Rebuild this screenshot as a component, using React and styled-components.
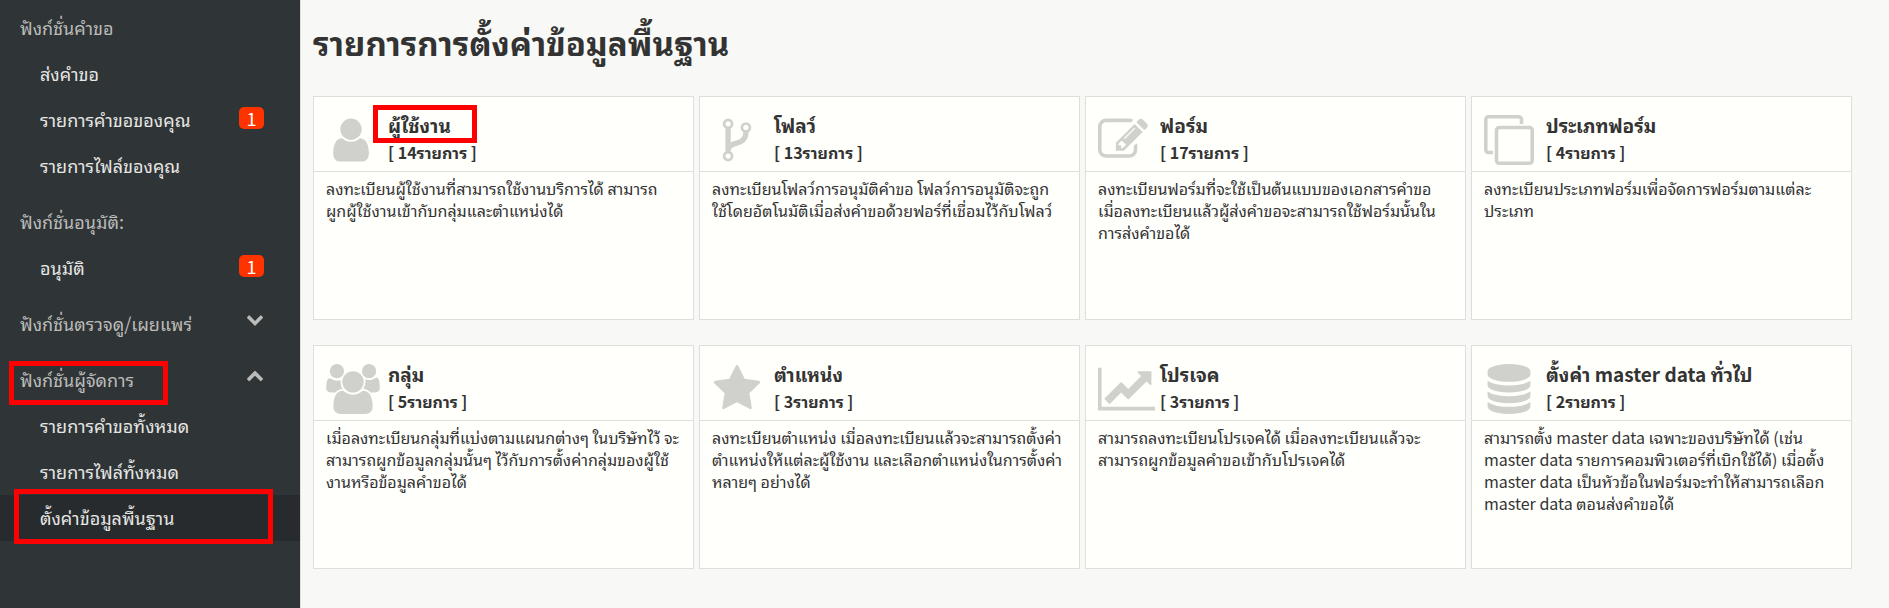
import React, { useState } from "react";
import styled, { createGlobalStyle } from "styled-components";

const icons = {
	user: {
		width: 1792,
		path: "M1536 1399q0 109-62.5 187t-150.5 78h-854q-88 0-150.5-78t-62.5-187q0-85 8.5-160.5t31.5-152 58.5-131 94-89 134.5-34.5q131 128 313 128t313-128q76 0 134.5 34.5t94 89 58.5 131 31.5 152 8.5 160.5zm-256-887q0 159-112.5 271.5t-271.5 112.5-271.5-112.5-112.5-271.5 112.5-271.5 271.5-112.5 271.5 112.5 112.5 271.5z",
	},
	fork: {
		width: 1792,
		path: "M672 1472q0-40-28-68t-68-28-68 28-28 68 28 68 68 28 68-28 28-68zm0-1152q0-40-28-68t-68-28-68 28-28 68 28 68 68 28 68-28 28-68zm640 128q0-40-28-68t-68-28-68 28-28 68 28 68 68 28 68-28 28-68zm96 0q0 52-26 96.5t-70 69.5q-2 287-226 414-67 38-203 81-128 40-169.5 71t-41.5 100v26q44 25 70 69.5t26 96.5q0 80-56 136t-136 56-136-56-56-136q0-52 26-96.5t70-69.5v-820q-44-25-70-69.5t-26-96.5q0-80 56-136t136-56 136 56 56 136q0 52-26 96.5t-70 69.5v497q54-26 154-57 55-17 87.5-29.5t70.5-31 59-39.5 40.5-51 28-69.5 8.5-91.5q-44-25-70-69.5t-26-96.5q0-80 56-136t136-56 136 56 56 136z",
	},
	edit: {
		width: 1792,
		path: "M888 1184l116-116-152-152-116 116v56h96v96h56zm440-720q-16-16-33 1l-350 350q-17 17-1 33t33-1l350-350q17-17 1-33zm80 594v190q0 119-84.5 203.5t-203.5 84.5h-832q-119 0-203.5-84.5t-84.5-203.5v-832q0-119 84.5-203.5t203.5-84.5h832q63 0 117 25 15 7 18 23 3 17-9 29l-49 49q-14 14-32 8-23-6-45-6h-832q-66 0-113 47t-47 113v832q0 66 47 113t113 47h832q66 0 113-47t47-113v-126q0-13 9-22l64-64q15-15 35-7t20 29zm-96-738l288 288-672 672h-288v-288zm444 132l-92 92-288-288 92-92q28-28 68-28t68 28l152 152q28 28 28 68t-28 68z",
	},
	clone: {
		width: 1792,
		path: "M1664 1632v-1088q0-13-9.5-22.5t-22.5-9.5h-1088q-13 0-22.5 9.5t-9.5 22.5v1088q0 13 9.5 22.5t22.5 9.5h1088q13 0 22.5-9.5t9.5-22.5zm128-1088v1088q0 66-47 113t-113 47h-1088q-66 0-113-47t-47-113v-1088q0-66 47-113t113-47h1088q66 0 113 47t47 113zm-384-384v160h-128v-160q0-13-9.5-22.5t-22.5-9.5h-1088q-13 0-22.5 9.5t-9.5 22.5v1088q0 13 9.5 22.5t22.5 9.5h160v128h-160q-66 0-113-47t-47-113v-1088q0-66 47-113t113-47h1088q66 0 113 47t47 113z",
	},
	users: {
		width: 1920,
		path: "M593 896q-162 5-265 128h-134q-82 0-138-40.5t-56-118.5q0-353 124-353 6 0 43.5 21t97.5 42.5 119 21.5q67 0 133-23-5 37-5 66 0 159 81 280zm1071 637q0 120-73 189.5t-194 69.5h-874q-121 0-194-69.5t-73-189.5q0-53 3.5-103.5t14-109 26.5-108.5 43-97.5 62-81 85.5-53.5 111.5-20q10 0 43 21.5t73 48 107 48 135 21.5 135-21.5 107-48 73-48 43-21.5q61 0 111.5 20t85.5 53.5 62 81 43 97.5 26.5 108.5 14 109 3.5 103.5zm-1024-1277q0 106-75 181t-181 75-181-75-75-181 75-181 181-75 181 75 75 181zm704 384q0 159-112.5 271.5t-271.5 112.5-271.5-112.5-112.5-271.5 112.5-271.5 271.5-112.5 271.5 112.5 112.5 271.5zm576 225q0 78-56 118.5t-138 40.5h-134q-103-123-265-128 81-121 81-280 0-29-5-66 66 23 133 23 59 0 119-21.5t97.5-42.5 43.5-21q124 0 124 353zm-128-609q0 106-75 181t-181 75-181-75-75-181 75-181 181-75 181 75 75 181z",
	},
	star: {
		width: 1792,
		path: "M1728 647q0 22-26 48l-363 354 86 500q1 7 1 20 0 21-10.5 35.5t-30.5 14.5q-19 0-40-12l-449-236-449 236q-22 12-40 12-21 0-31.5-14.5t-10.5-35.5q0-6 2-20l86-500-364-354q-25-27-25-48 0-37 56-46l502-73 225-455q19-41 49-41t49 41l225 455 502 73q56 9 56 46z",
	},
	chart: {
		width: 2048,
		path: "M2048 1536v128h-2048v-1536h128v1408h1920zm-128-1248v435q0 21-19.5 29.5t-35.5-7.5l-121-121-633 633q-10 10-23 10t-23-10l-233-233-416 416-192-192 585-585q10-10 23-10t23 10l233 233 464-464-121-121q-16-16-7.5-35.5t29.5-19.5h435q14 0 23 9t9 23z",
	},
	database: {
		width: 1792,
		path: "M896 768q237 0 443-43t325-127v170q0 69-103 128t-280 93.5-385 34.5-385-34.5-280-93.5-103-128v-170q119 84 325 127t443 43zm0 768q237 0 443-43t325-127v170q0 69-103 128t-280 93.5-385 34.5-385-34.5-280-93.5-103-128v-170q119 84 325 127t443 43zm0-384q237 0 443-43t325-127v170q0 69-103 128t-280 93.5-385 34.5-385-34.5-280-93.5-103-128v-170q119 84 325 127t443 43zm0-1152q208 0 385 34.5t280 93.5 103 128v128q0 69-103 128t-280 93.5-385 34.5-385-34.5-280-93.5-103-128v-128q0-69 103-128t280-93.5 385-34.5z",
	},
	down: {
		width: 1792,
		path: "M1683 808l-742 741q-19 19-45 19t-45-19l-742-741q-19-19-19-45.5t19-45.5l166-165q19-19 45-19t45 19l531 531 531-531q19-19 45-19t45 19l166 165q19 19 19 45.5t-19 45.5z",
	},
	up: {
		width: 1792,
		path: "M1683 1331l-166 165q-19 19-45 19t-45-19l-531-531-531 531q-19 19-45 19t-45-19l-166-165q-19-19-19-45.5t19-45.5l742-741q19-19 45-19t45 19l742 741q19 19 19 45.5t-19 45.5z",
	},
};

const requestMenu = [
	{ label: "ส่งคำขอ" },
	{ label: "รายการคำขอของคุณ", count: 1 },
	{ label: "รายการไฟล์ของคุณ" },
];
const approveMenu = [{ label: "อนุมัติ", count: 1 }];
const adminMenu = [
	{ label: "รายการคำขอทั้งหมด" },
	{ label: "รายการไฟล์ทั้งหมด" },
	{ label: "ตั้งค่าข้อมูลพื้นฐาน", active: true },
];

const settings = [
	{
		icon: "user",
		title: "ผู้ใช้งาน",
		count: 14,
		marked: true,
		lines: ["ลงทะเบียนผู้ใช้งานที่สามารถใช้งานบริการได้ สามารถ", "ผูกผู้ใช้งานเข้ากับกลุ่มและตำแหน่งได้"],
	},
	{
		icon: "fork",
		title: "โฟลว์",
		count: 13,
		lines: ["ลงทะเบียนโฟลว์การอนุมัติคำขอ โฟลว์การอนุมัติจะถูก", "ใช้โดยอัตโนมัติเมื่อส่งคำขอด้วยฟอร์ที่เชื่อมไว้กับโฟลว์"],
	},
	{
		icon: "edit",
		title: "ฟอร์ม",
		count: 17,
		lines: [
			"ลงทะเบียนฟอร์มที่จะใช้เป็นต้นแบบของเอกสารคำขอ",
			"เมื่อลงทะเบียนแล้วผู้ส่งคำขอจะสามารถใช้ฟอร์มนั้นใน",
			"การส่งคำขอได้",
		],
	},
	{
		icon: "clone",
		title: "ประเภทฟอร์ม",
		count: 4,
		lines: ["ลงทะเบียนประเภทฟอร์มเพื่อจัดการฟอร์มตามแต่ละ", "ประเภท"],
	},
	{
		icon: "users",
		title: "กลุ่ม",
		count: 5,
		lines: [
			"เมื่อลงทะเบียนกลุ่มที่แบ่งตามแผนกต่างๆ ในบริษัทไว้ จะ",
			"สามารถผูกข้อมูลกลุ่มนั้นๆ ไว้กับการตั้งค่ากลุ่มของผู้ใช้",
			"งานหรือข้อมูลคำขอได้",
		],
	},
	{
		icon: "star",
		title: "ตำแหน่ง",
		count: 3,
		lines: [
			"ลงทะเบียนตำแหน่ง เมื่อลงทะเบียนแล้วจะสามารถตั้งค่า",
			"ตำแหน่งให้แต่ละผู้ใช้งาน และเลือกตำแหน่งในการตั้งค่า",
			"หลายๆ อย่างได้",
		],
	},
	{
		icon: "chart",
		title: "โปรเจค",
		count: 3,
		lines: ["สามารถลงทะเบียนโปรเจคได้ เมื่อลงทะเบียนแล้วจะ", "สามารถผูกข้อมูลคำขอเข้ากับโปรเจคได้"],
	},
	{
		icon: "database",
		title: "ตั้งค่า master data ทั่วไป",
		count: 2,
		lines: [
			"สามารถตั้ง master data เฉพาะของบริษัทได้ (เช่น",
			"master data รายการคอมพิวเตอร์ที่เบิกใช้ได้) เมื่อตั้ง",
			"master data เป็นหัวข้อในฟอร์มจะทำให้สามารถเลือก",
			"master data ตอนส่งคำขอได้",
		],
	},
];

function Icon({ name, size }) {
	const { width, path } = icons[name];
	return (
		<svg
			width={Math.round((size * width) / 1792)}
			height={size}
			viewBox={`0 0 ${width} 1792`}
			fill="currentColor"
			aria-hidden="true"
		>
			<path d={path} />
		</svg>
	);
}

function MenuList({ items }) {
	return (
		<Menu>
			{items.map((item) => (
				<li key={item.label}>
					<MenuLink href="#" $active={item.active}>
						{item.label}
						{item.count && <Badge>{item.count}</Badge>}
						{item.active && <ActiveMark />}
					</MenuLink>
				</li>
			))}
		</Menu>
	);
}

function SettingCard({ data }) {
	return (
		<Card>
			<CardHeader>
				<CardIcon>
					<Icon name={data.icon} size={50} />
				</CardIcon>
				<div>
					<CardTitle>
						{data.title}
						{data.marked && <TitleMark />}
					</CardTitle>
					<CardCount>[ {data.count}รายการ ]</CardCount>
				</div>
			</CardHeader>
			<CardBody>
				{data.lines.map((line) => (
					<Line key={line}>{line}</Line>
				))}
			</CardBody>
		</Card>
	);
}

export default function App() {
	const [viewOpen, setViewOpen] = useState(false);
	const [adminOpen, setAdminOpen] = useState(true);

	return (
		<Page>
			<GlobalStyle />
			<Sidebar>
				<Group>
					<GroupTitle>ฟังก์ชั่นคำขอ</GroupTitle>
					<MenuList items={requestMenu} />
				</Group>
				<Group>
					<GroupTitle>ฟังก์ชั่นอนุมัติ:</GroupTitle>
					<MenuList items={approveMenu} />
				</Group>
				<Group>
					<GroupToggle aria-expanded={viewOpen} onClick={() => setViewOpen(!viewOpen)}>
						ฟังก์ชั่นตรวจดู/เผยแพร่
						<Icon name={viewOpen ? "up" : "down"} size={18} />
					</GroupToggle>
				</Group>
				<Group>
					<GroupToggle aria-expanded={adminOpen} onClick={() => setAdminOpen(!adminOpen)}>
						ฟังก์ชั่นผู้จัดการ
						<Icon name={adminOpen ? "up" : "down"} size={18} />
						<GroupMark />
					</GroupToggle>
					{adminOpen && <MenuList items={adminMenu} />}
				</Group>
			</Sidebar>
			<Main>
				<PageTitle>รายการการตั้งค่าข้อมูลพื้นฐาน</PageTitle>
				<CardGrid>
					{settings.map((data) => (
						<SettingCard key={data.icon} data={data} />
					))}
				</CardGrid>
			</Main>
		</Page>
	);
}

const GlobalStyle = createGlobalStyle`
	* {
		box-sizing: border-box;
	}
	body {
		margin: 0;
		background-color: #f8f9f6;
		color: #333333;
		font-family: "Noto Sans CJK JP", "Leelawadee UI", Tahoma, "Noto Sans Thai Looped", Loma, Waree, Garuda, sans-serif;
		font-size: 18px;
	}
`;

const Page = styled.div`
	display: flex;
	min-height: 100vh;
`;
const Sidebar = styled.nav`
	flex: 0 0 301px;
	padding-top: 5px;
	border-right: 1px solid #dddfda;
	background-color: #2f3437;
`;
const Group = styled.section`
	padding-bottom: 10px;
`;
const GroupTitle = styled.h2`
	display: flex;
	align-items: center;
	height: 46px;
	margin: 0;
	padding: 0 36px 2px 20px;
	color: #bbbbb8;
	font-size: 18px;
	font-weight: 400;
`;
const GroupToggle = styled.button`
	position: relative;
	display: flex;
	align-items: center;
	justify-content: space-between;
	width: 100%;
	height: 46px;
	padding: 0 36px 2px 20px;
	border: 0;
	background: none;
	color: #bbbbb8;
	font: inherit;
	cursor: pointer;
	svg {
		margin-bottom: 8px;
	}
`;
const Menu = styled.ul`
	margin: 0;
	padding: 0;
	list-style: none;
`;
const MenuLink = styled.a`
	position: relative;
	display: flex;
	align-items: center;
	justify-content: space-between;
	height: 46px;
	padding: 0 36px 2px 40px;
	background-color: ${({ $active }) => ($active ? "#272b2e" : "transparent")};
	color: #e6e6e3;
	text-decoration: none;
`;
const Badge = styled.span`
	width: 25px;
	height: 22px;
	margin-bottom: 2px;
	border-radius: 5px;
	background-color: #ff3300;
	color: #ffffff;
	line-height: 22px;
	text-align: center;
`;
const Mark = styled.span`
	position: absolute;
	border: 5px solid #ff0000;
	pointer-events: none;
`;
const GroupMark = styled(Mark)`
	top: 4px;
	left: 9px;
	width: 159px;
	height: 44px;
`;
const ActiveMark = styled(Mark)`
	inset: -6px 27px -3px 14px;
`;
const TitleMark = styled(Mark)`
	top: -6px;
	left: -15px;
	width: 104px;
	height: 38px;
`;

const Main = styled.main`
	flex: 1;
	min-width: 0;
	padding: 14px 37px 24px 12px;
`;
const PageTitle = styled.h1`
	margin: 0 0 26px;
	font-size: 33px;
	font-weight: 700;
	line-height: 56px;
`;
const CardGrid = styled.div`
	display: grid;
	grid-template-columns: repeat(4, minmax(0, 1fr));
	gap: 25px 5px;
`;
const Card = styled.article`
	height: 224px;
	border: 1px solid #dddfda;
	background-color: #fffffc;
`;
const CardHeader = styled.header`
	display: flex;
	gap: 12px;
	height: 75px;
	padding: 14px 12px 0;
	border-bottom: 1px solid #dddfda;
`;
const CardIcon = styled.div`
	flex: 0 0 50px;
	min-width: 0;
	padding-top: 4px;
	color: #d0d1cc;
	svg {
		display: block;
	}
`;
const CardTitle = styled.h3`
	position: relative;
	margin: 0;
	font-size: 19px;
	font-weight: 700;
	line-height: 28px;
`;
const CardCount = styled.div`
	font-size: 16px;
	font-weight: 700;
	line-height: 26px;
`;
const CardBody = styled.p`
	margin: 0;
	padding: 5px 12px;
	font-size: 16px;
	line-height: 22px;
`;
const Line = styled.span`
	display: block;
	white-space: nowrap;
`;
